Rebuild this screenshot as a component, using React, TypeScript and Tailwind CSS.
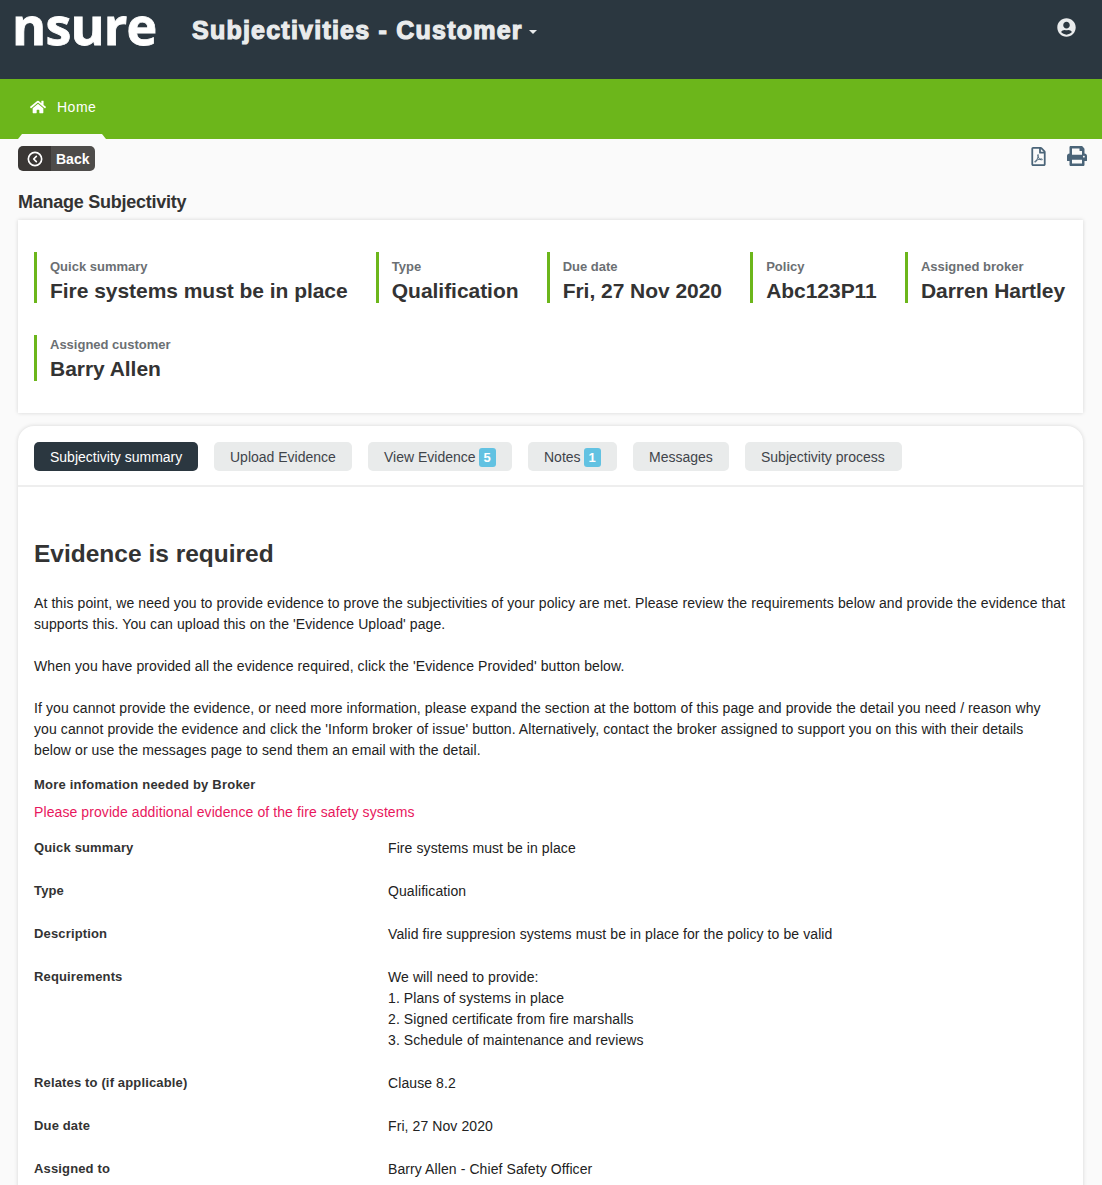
import { CircleChevronLeft } from 'lucide-react';
import { FaHome, FaPrint, FaRegFilePdf, FaUserCircle } from 'react-icons/fa';

const summary = [
  { label: 'Quick summary', value: 'Fire systems must be in place' },
  { label: 'Type', value: 'Qualification' },
  { label: 'Due date', value: 'Fri, 27 Nov 2020' },
  { label: 'Policy', value: 'Abc123P11' },
  { label: 'Assigned broker', value: 'Darren Hartley' },
  { label: 'Assigned customer', value: 'Barry Allen', short: true },
];

const tabs = [
  { label: 'Subjectivity summary', active: true, width: 'w-[164px]' },
  { label: 'Upload Evidence', width: 'w-[138px]' },
  { label: 'View Evidence', badge: '5', width: 'w-[144px]' },
  { label: 'Notes', badge: '1', width: 'w-[89px]' },
  { label: 'Messages', width: 'w-[96px]' },
  { label: 'Subjectivity process', width: 'w-[157px]' },
];

const details = [
  { label: 'Quick summary', lines: ['Fire systems must be in place'] },
  { label: 'Type', lines: ['Qualification'] },
  { label: 'Description', lines: ['Valid fire suppresion systems must be in place for the policy to be valid'] },
  {
    label: 'Requirements',
    lines: ['We will need to provide:', '1. Plans of systems in place', '2. Signed certificate from fire marshalls', '3. Schedule of maintenance and reviews'],
  },
  { label: 'Relates to (if applicable)', lines: ['Clause 8.2'] },
  { label: 'Due date', lines: ['Fri, 27 Nov 2020'] },
  { label: 'Assigned to', lines: ['Barry Allen - Chief Safety Officer'] },
];

export default function App() {
  return (
    <div className="h-[1185px] overflow-hidden bg-[#fafafa] font-['Liberation_Sans',Arial,sans-serif] text-[14px] leading-[21px] text-[#333333]">
      {/* Top bar */}
      <header className="flex h-[79px] items-start bg-[#2b3740] text-[#e9ebec]">
        <svg width="150" height="60" className="ml-[12px] shrink-0">
          <text x="0" y="45" fill="#ffffff" stroke="#ffffff" strokeWidth="0.8" fontFamily="Open Sans, sans-serif" fontSize="52" fontWeight="700" letterSpacing="-0.8">
            nsure
          </text>
        </svg>
        <div className="ml-[30px] mt-[14px] flex items-center text-[25px] leading-[32px] font-bold tracking-[1.23px] [-webkit-text-stroke:1.2px_#e9ebec]">
          Subjectivities - Customer
          <span className="ml-[6px] mt-[3px] h-0 w-0 border-x-[4px] border-t-[4px] border-x-transparent border-t-[#e9ebec]"></span>
        </div>
        <FaUserCircle className="ml-auto mr-[26px] mt-[18px] text-[19px]" />
      </header>

      {/* Nav */}
      <nav className="relative flex h-[60px] items-start bg-[#6cb61b] pl-[30px] pt-[18px] text-white">
        <FaHome className="mt-[2px] text-[16px]" />
        <span className="ml-[11px] text-[14px] tracking-[0.5px]">Home</span>
        <div className="absolute bottom-0 left-[18px] h-[5px] w-[88px] bg-[#fafafa] [clip-path:polygon(4px_0,84px_0,100%_100%,0_100%)]"></div>
      </nav>

      <main className="pl-[18px] pr-[19px]">
        <div className="flex h-[53px] items-start justify-between pt-[7px]">
          <button className="flex h-[25px] overflow-hidden rounded-[5px] text-[14px] font-bold text-white">
            <span className="flex h-full w-[33px] items-center justify-center bg-[#3a3735]">
              <CircleChevronLeft size={16} strokeWidth={2.5} />
            </span>
            <span className="flex h-full w-[44px] items-center bg-[#4e4c4a] pl-[5px] pt-[1px]">Back</span>
          </button>
          <div className="flex items-center text-[#4a6478]">
            <FaRegFilePdf className="ml-[1px] text-[19px]" />
            <FaPrint className="ml-[19px] mr-[-4px] text-[20px]" />
          </div>
        </div>

        <h2 className="mb-[8px] text-[18px] leading-[20px] font-bold tracking-[-0.25px]">Manage Subjectivity</h2>

        {/* Summary card */}
        <section className="flex h-[193px] flex-wrap content-start gap-x-[28.2px] gap-y-[32px] bg-white pl-[16px] pt-[32px] shadow-[0_0_4px_rgba(0,0,0,0.15)]">
          {summary.map((item) => (
            <div key={item.label} className={item.short ? 'h-[46px] border-l-[3px] border-[#6cb61b] pl-[13px]' : 'h-[51px] border-l-[3px] border-[#6cb61b] pl-[13px]'}>
              <div className={item.short ? 'pt-[1px] text-[13px] leading-[18px] font-bold text-[#6b6f73]' : 'pt-[6px] text-[13px] leading-[18px] font-bold text-[#6b6f73]'}>{item.label}</div>
              <div className="pt-[2px] text-[21px] leading-[26px] font-bold tracking-[-0.04px]">{item.value}</div>
            </div>
          ))}
        </section>

        {/* Tabbed card */}
        <section className="mt-[13px] rounded-t-[16px] bg-white shadow-[0_0_4px_rgba(0,0,0,0.15)]">
          <div className="flex h-[61px] gap-[16px] border-b-2 border-[#eeeeee] pl-[16px] pt-[16px]">
            {tabs.map((tab) => (
              <div
                key={tab.label}
                className={
                  tab.active
                    ? `flex h-[29px] items-center rounded-[5px] bg-[#2b3740] pl-[16px] pt-[1px] text-white ${tab.width}`
                    : `flex h-[29px] items-center rounded-[5px] bg-[#e9ebeb] pl-[16px] pt-[1px] text-[#3f444a] ${tab.width}`
                }
              >
                {tab.label}
                {tab.badge && (
                  <span className="ml-[3px] flex h-[19px] w-[17px] items-center justify-center rounded-[3px] bg-[#62c2e2] text-[13px] font-bold text-white">
                    {tab.badge}
                  </span>
                )}
              </div>
            ))}
          </div>

          <div className="px-[16px] pt-[50px] tracking-[0.09px]">
            <h1 className="text-[24.5px] leading-[34px] font-bold tracking-normal">Evidence is required</h1>
            <p className="mt-[22px] text-[#222222]">
              At this point, we need you to provide evidence to prove the subjectivities of your policy are met. Please review the requirements below and provide the evidence that supports this. You can upload this on the 'Evidence Upload' page.
            </p>
            <p className="mt-[21px] text-[#222222]">When you have provided all the evidence required, click the 'Evidence Provided' button below.</p>
            <p className="mt-[21px] text-[#222222]">
              If you cannot provide the evidence, or need more information, please expand the section at the bottom of this page and provide the detail you need / reason why you cannot provide the evidence and click the 'Inform broker of issue' button. Alternatively, contact the broker assigned to support you on this with their details
              <br />
              below or use the messages page to send them an email with the detail.
            </p>
            <div className="mt-[13px] text-[13px] font-bold tracking-[0.22px]">More infomation needed by Broker</div>
            <div className="mt-[7px] text-[#e8175d]">Please provide additional evidence of the fire safety systems</div>
            <div className="mt-[14px]">
              {details.map((row) => (
                <div key={row.label} className="flex pb-[21px]">
                  <div className="w-[354px] text-[13px] font-bold tracking-[0.15px]">{row.label}</div>
                  <div className="pt-[1px] text-[#222222]">
                    {row.lines.map((line) => (
                      <div key={line}>{line}</div>
                    ))}
                  </div>
                </div>
              ))}
            </div>
          </div>
        </section>
      </main>
    </div>
  );
}
